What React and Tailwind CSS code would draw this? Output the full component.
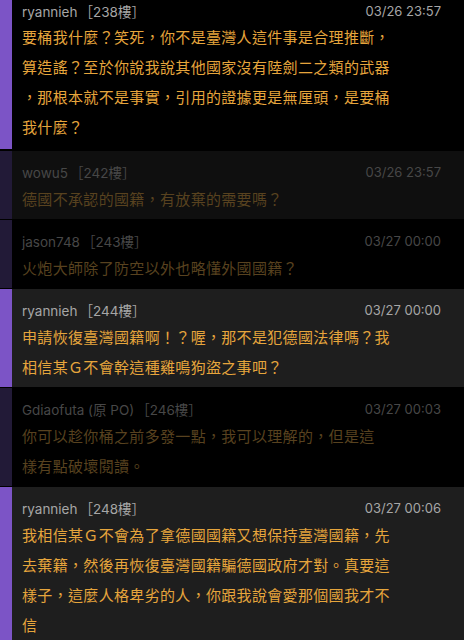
import React from "react";

const rows = [
  {
    user: "ryannieh",
    floor: "238",
    date: "03/26 23:57",
    lines: [
      "要桶我什麼？笑死，你不是臺灣人這件事是合理推斷，",
      "算造謠？至於你說我說其他國家沒有陸劍二之類的武器",
      "，那根本就不是事實，引用的證據更是無厘頭，是要桶",
      "我什麼？",
    ],
    me: true,
    bg: "bg-black",
    first: true,
  },
  {
    user: "wowu5",
    floor: "242",
    date: "03/26 23:57",
    lines: ["德國不承認的國籍，有放棄的需要嗎？"],
    me: false,
    bg: "bg-[#0f0f0f]",
  },
  {
    user: "jason748",
    floor: "243",
    date: "03/27 00:00",
    lines: ["火炮大師除了防空以外也略懂外國國籍？"],
    me: false,
    bg: "bg-black",
  },
  {
    user: "ryannieh",
    floor: "244",
    date: "03/27 00:00",
    lines: [
      "申請恢復臺灣國籍啊！？喔，那不是犯德國法律嗎？我",
      "相信某Ｇ不會幹這種雞鳴狗盜之事吧？",
    ],
    me: true,
    bg: "bg-[#1e1e1e]",
  },
  {
    user: "Gdiaofuta (原 PO)",
    floor: "246",
    date: "03/27 00:03",
    lines: ["你可以趁你桶之前多發一點，我可以理解的，但是這", "樣有點破壞閱讀。"],
    me: false,
    bg: "bg-black",
  },
  {
    user: "ryannieh",
    floor: "248",
    date: "03/27 00:06",
    lines: [
      "我相信某Ｇ不會為了拿德國國籍又想保持臺灣國籍，先",
      "去棄籍，然後再恢復臺灣國籍騙德國政府才對。真要這",
      "樣子，這麼人格卑劣的人，你跟我說會愛那個國我才不",
      "信",
    ],
    me: true,
    bg: "bg-[#1e1e1e]",
  },
];

function Row({ r }) {
  return (
    <div className={`flex ${r.bg}`}>
      <div className={`w-[12px] shrink-0 ${r.me ? "bg-[#7c54c6]" : "bg-[#221a37]"}`} />
      <div className={`flex-1 pl-[10px] pr-[23px] ${r.first ? "pt-[1px] pb-[6px]" : "pt-[10px] pb-[4px]"}`}>
        <div
          className={`flex items-center justify-between ${r.first ? "h-[22px]" : "h-[24px]"} ${
            r.me ? "text-[#a6a6a6]" : "text-[#474747]"
          }`}
        >
          <span className="text-[13.5px]">
            {r.user}
            <span className="ml-[2px]">［{r.floor}樓］</span>
          </span>
          <span className="text-[13px]">{r.date}</span>
        </div>
        <div className={`text-[15px] tracking-[0.33px] ${r.me ? "text-[#e6a53c]" : "text-[#58421f]"}`}>
          {r.lines.map((l, i) => (
            <div key={i} className="h-[30px] leading-[30px] whitespace-nowrap">
              {l}
            </div>
          ))}
        </div>
      </div>
    </div>
  );
}

export default function App() {
  return (
    <div
      className="w-[464px] h-[640px] overflow-hidden bg-black flex flex-col gap-px"
      style={{ fontFamily: 'Inter, "Noto Sans CJK TC", sans-serif' }}
    >
      {rows.map((r, i) => (
        <div key={i} className={i === 1 ? "mt-px" : ""}>
          <Row r={r} />
        </div>
      ))}
    </div>
  );
}
